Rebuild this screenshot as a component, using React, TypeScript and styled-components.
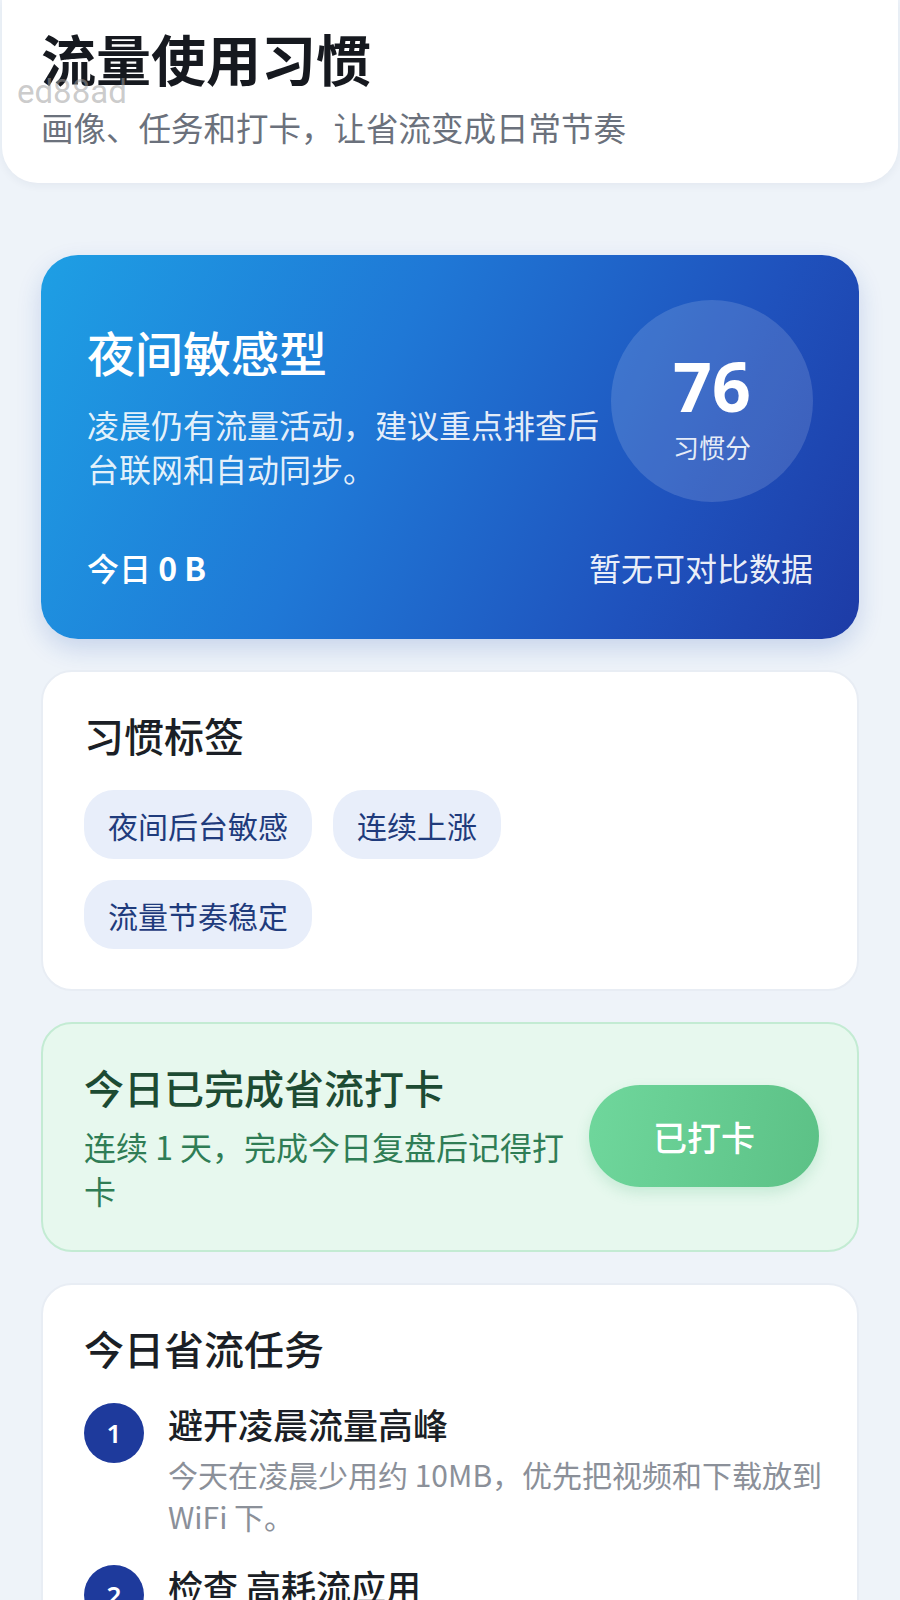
import React from "react";
import styled, { createGlobalStyle } from "styled-components";

const GlobalStyle = createGlobalStyle`
  html, body {
    margin: 0;
    padding: 0;
    background: #eef3f9;
  }
  body {
    font-family: "Noto Sans CJK SC", "Noto Sans", sans-serif;
    color: #1b1f26;
  }
`;

const Page = styled.div`
  min-height: 1600px;
  background: #eef3f9;
  overflow: hidden;
`;

const Header = styled.header`
  position: relative;
  margin: 0 2px;
  padding: 24px 39px 34px;
  background: #fff;
  border-radius: 0 0 36px 36px;
  box-shadow: 0 2px 10px rgba(30, 50, 90, 0.06);
`;

const HeaderTitle = styled.h1`
  margin: 0;
  font-size: 55px;
  line-height: 66px;
  font-weight: 700;
  color: #16191f;
`;

const HeaderSub = styled.p`
  margin: 14px 0 0;
  font-size: 32.5px;
  line-height: 45px;
  color: #6b717c;
`;

const Watermark = styled.span`
  position: absolute;
  left: 15px;
  top: 72px;
  font-family: Roboto, "Liberation Sans", sans-serif;
  font-size: 33px;
  line-height: 40px;
  color: rgba(160, 160, 160, 0.55);
`;

const Content = styled.main`
  display: flex;
  flex-direction: column;
  gap: 31px;
  padding: 72px 41px 40px;
`;

const Hero = styled.section`
  padding: 45px 46px 49px;
  border-radius: 37px;
  background: linear-gradient(115deg, #1e9fe4 0%, #1f78d6 40%, #1f52bd 75%, #1d3ba6 100%);
  color: #fff;
  box-shadow: 0 10px 24px rgba(30, 80, 180, 0.18);
`;

const HeroTop = styled.div`
  display: flex;
  align-items: center;
  justify-content: space-between;
  gap: 4px;
`;

const HeroText = styled.div`
  flex: 1;
  min-width: 0;
  padding-top: 8px;
`;

const HeroTitle = styled.h2`
  margin: 0;
  font-size: 48px;
  line-height: 62px;
  font-weight: 500;
`;

const HeroDesc = styled.p`
  margin: 20px 0 0;
  font-size: 32px;
  line-height: 44px;
  color: rgba(255, 255, 255, 0.9);
`;

const ScoreCircle = styled.div`
  flex: 0 0 202px;
  height: 202px;
  border-radius: 50%;
  background: rgba(255, 255, 255, 0.14);
  display: flex;
  flex-direction: column;
  align-items: center;
  justify-content: center;
  padding-top: 14px;
  box-sizing: border-box;
`;

const ScoreValue = styled.div`
  font-family: "Noto Sans", "Open Sans", sans-serif;
  font-size: 68px;
  line-height: 70px;
  font-weight: 700;
`;

const ScoreLabel = styled.div`
  font-size: 26px;
  line-height: 36px;
  color: rgba(255, 255, 255, 0.88);
  margin-top: 8px;
`;

const HeroBottom = styled.div`
  display: flex;
  justify-content: space-between;
  align-items: center;
  margin-top: 43px;
  font-size: 32px;
  line-height: 45px;
`;

const Today = styled.span`
  font-weight: 500;
  b {
    font-weight: 700;
  }
`;

const Compare = styled.span`
  color: rgba(255, 255, 255, 0.92);
`;

const Card = styled.section<{ $tone?: "white" | "green"; $padRight?: number }>`
  padding: 36px ${(p) => p.$padRight ?? 41}px 40px 41px;
  border-radius: 31px;
  background: ${(p) => (p.$tone === "green" ? "#e7f8ee" : "#ffffff")};
  border: 2px solid ${(p) => (p.$tone === "green" ? "#c3ebd3" : "#e8edf4")};
`;

const CardTitle = styled.h3<{ $color?: string }>`
  margin: 0;
  font-size: 40px;
  line-height: 54px;
  font-weight: 500;
  color: ${(p) => p.$color || "#1b1f26"};
`;

const Tags = styled.div`
  display: flex;
  flex-wrap: wrap;
  gap: 21px;
  margin-top: 28px;
  max-width: 460px;
`;

const Tag = styled.span`
  display: inline-flex;
  align-items: center;
  height: 69px;
  padding: 0 24px;
  border-radius: 30px;
  background: #e8eefa;
  color: #1f3b7c;
  font-size: 30px;
  font-weight: 400;
`;

const CheckRow = styled.div`
  display: flex;
  align-items: center;
  gap: 18px;
  margin-bottom: -2px;
`;

const CheckText = styled.div`
  flex: 1;
  min-width: 0;
`;

const CheckSub = styled.p`
  margin: 10px 0 0;
  font-size: 32px;
  line-height: 44px;
  color: #2f7d55;
`;

const CheckButton = styled.button`
  flex: 0 0 230px;
  height: 102px;
  border: none;
  border-radius: 51px;
  background: linear-gradient(100deg, #6fd79c 0%, #5cc186 100%);
  color: #fff;
  font-family: inherit;
  font-size: 34px;
  font-weight: 500;
  box-shadow: 0 6px 14px rgba(70, 180, 120, 0.2);
`;

const TaskList = styled.ol`
  list-style: none;
  margin: 24px 0 0;
  padding: 0;
  display: flex;
  flex-direction: column;
  gap: 24px;
`;

const TaskItem = styled.li`
  display: flex;
  align-items: flex-start;
  gap: 24px;
`;

const TaskNum = styled.span`
  flex: 0 0 60px;
  height: 60px;
  margin-top: 4px;
  border-radius: 50%;
  background: #1e3a9c;
  color: #fff;
  display: flex;
  align-items: center;
  justify-content: center;
  font-family: "Noto Sans", sans-serif;
  font-size: 26px;
  font-weight: 600;
`;

const TaskBody = styled.div`
  flex: 1;
  min-width: 0;
`;

const TaskTitle = styled.div`
  font-size: 35px;
  line-height: 50px;
  font-weight: 500;
  color: #1b1f26;
`;

const TaskDesc = styled.div`
  margin-top: 4px;
  font-size: 30px;
  line-height: 42px;
  color: #8b9099;
`;

const tags = ["夜间后台敏感", "连续上涨", "流量节奏稳定"];

const tasks = [
  {
    title: "避开凌晨流量高峰",
    desc: "今天在凌晨少用约 10MB，优先把视频和下载放到 WiFi 下。",
  },
  {
    title: "检查 高耗流应用",
    desc: "查看近 7 天的应用排行，关闭不常用应用的后台数据。",
  },
];

export default function App() {
  return (
    <Page>
      <GlobalStyle />
      <Header>
        <HeaderTitle>流量使用习惯</HeaderTitle>
        <HeaderSub>画像、任务和打卡，让省流变成日常节奏</HeaderSub>
        <Watermark>ed88ad</Watermark>
      </Header>
      <Content>
        <Hero>
          <HeroTop>
            <HeroText>
              <HeroTitle>夜间敏感型</HeroTitle>
              <HeroDesc>凌晨仍有流量活动，建议重点排查后台联网和自动同步。</HeroDesc>
            </HeroText>
            <ScoreCircle>
              <ScoreValue>76</ScoreValue>
              <ScoreLabel>习惯分</ScoreLabel>
            </ScoreCircle>
          </HeroTop>
          <HeroBottom>
            <Today>
              今日 <b>0 B</b>
            </Today>
            <Compare>暂无可对比数据</Compare>
          </HeroBottom>
        </Hero>

        <Card>
          <CardTitle>习惯标签</CardTitle>
          <Tags>
            {tags.map((t) => (
              <Tag key={t}>{t}</Tag>
            ))}
          </Tags>
        </Card>

        <Card $tone="green" $padRight={38}>
          <CheckRow>
            <CheckText>
              <CardTitle $color="#1d4b33">今日已完成省流打卡</CardTitle>
              <CheckSub>连续 1 天，完成今日复盘后记得打卡</CheckSub>
            </CheckText>
            <CheckButton>已打卡</CheckButton>
          </CheckRow>
        </Card>

        <Card $padRight={30}>
          <CardTitle>今日省流任务</CardTitle>
          <TaskList>
            {tasks.map((t, i) => (
              <TaskItem key={t.title}>
                <TaskNum>{i + 1}</TaskNum>
                <TaskBody>
                  <TaskTitle>{t.title}</TaskTitle>
                  <TaskDesc>{t.desc}</TaskDesc>
                </TaskBody>
              </TaskItem>
            ))}
          </TaskList>
        </Card>
      </Content>
    </Page>
  );
}
